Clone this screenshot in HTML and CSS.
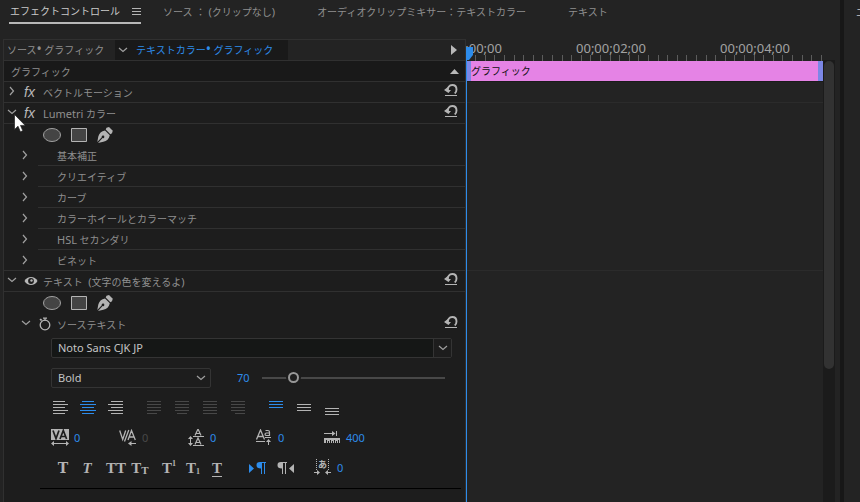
FILE: index.html
```html
<!DOCTYPE html>
<html lang="ja">
<head>
<meta charset="utf-8">
<title>エフェクトコントロール</title>
<link rel="stylesheet" href="styles.css">
</head>
<body>
<svg class="defs" aria-hidden="true">
  <symbol id="right" viewBox="0 0 10 10"><path d="M3 1l3.500 4L3 9" fill="none" stroke="currentColor" stroke-width="1.200"/></symbol>
  <symbol id="down" viewBox="0 0 10 10"><path d="M1 3l4 3.500L9 3" fill="none" stroke="currentColor" stroke-width="1.200"/></symbol>
  <symbol id="reset" viewBox="0 0 14 14"><path d="M4 8.500C3 4.500 5.500 2 8.300 2c2.600 0 4.200 2 4.200 4.500 0 1.700-.6 3.200-1.800 4" fill="none" stroke="currentColor" stroke-width="1.900"/><path d="M0 7l4.500-3.500V7H7l-2.500 3zM1 12h12v1H1z" fill="currentColor"/></symbol>
  <symbol id="ellipse" viewBox="0 0 18 14"><ellipse cx="9" cy="7" rx="8.500" ry="6.500" fill="#444" stroke="#a2a2a2"/></symbol>
  <symbol id="rect" viewBox="0 0 16 14"><path d="M.5.5h15v13H.5z" fill="#444" stroke="#b4b4b4"/></symbol>
  <symbol id="pen" viewBox="0 0 16 16"><path d="M9.500.7L12 0l3.800 3.800-.8 2.500-1.600 1L8.700 2.400z" fill="#b4b4b4"/><path d="M8 3.400l4.800 4.800c-.8 3.600-3 6-6.500 6.600L1 16l4.600-5a1.300 1.300 0 1 0-.8-.8L.3 15l1-5.400C2 6.200 4.500 4 8 3.400z" fill="#b4b4b4"/></symbol>
  <symbol id="eye" viewBox="0 0 14 10"><path d="M.5 5C3-.2 11-.2 13.500 5 11 10.200 3 10.200.5 5z" fill="#b8b8b8"/><circle cx="7" cy="5" r="2.900" fill="#1d1d1d"/><circle cx="7.500" cy="4.500" r="1.200" fill="#b8b8b8"/></symbol>
  <symbol id="watch" viewBox="0 0 12 14"><circle cx="6" cy="8" r="4.800" fill="none" stroke="currentColor" stroke-width="1.300"/><path d="M4 .5h4v1.300H4zM5.400 1h1.200v3H5.400zM.4 2.600l1.500-1L3.300 3 2 4z" fill="currentColor"/></symbol>
  <symbol id="al-left" viewBox="0 0 16 14"><path d="M1 .5h12M1 3.500h15M1 6.500h12M1 9.500h15M1 12.500h12" stroke="currentColor"/></symbol>
  <symbol id="al-center" viewBox="0 0 16 14"><path d="M2 .5h12M0 3.500h16M2 6.500h12M0 9.500h16M2 12.500h12" stroke="currentColor"/></symbol>
  <symbol id="al-right" viewBox="0 0 16 14"><path d="M3 .5h12M0 3.500h15M3 6.500h12M0 9.500h15M3 12.500h12" stroke="currentColor"/></symbol>
  <symbol id="ju-left" viewBox="0 0 16 14"><path d="M1 .5h14M1 3.500h14M1 6.500h14M1 9.500h14M1 12.500h10" stroke="currentColor"/></symbol>
  <symbol id="ju-center" viewBox="0 0 16 14"><path d="M1 .5h14M1 3.500h14M1 6.500h14M1 9.500h14M3 12.500h10" stroke="currentColor"/></symbol>
  <symbol id="ju-all" viewBox="0 0 16 14"><path d="M1 .5h14M1 3.500h14M1 6.500h14M1 9.500h14M1 12.500h14" stroke="currentColor"/></symbol>
  <symbol id="ju-right" viewBox="0 0 16 14"><path d="M1 .5h14M1 3.500h14M1 6.500h14M1 9.500h14M5 12.500h10" stroke="currentColor"/></symbol>
  <symbol id="v-top" viewBox="0 0 16 14"><path d="M1 .5h14M1 3.500h14M1 6.500h14" stroke="currentColor"/></symbol>
  <symbol id="v-mid" viewBox="0 0 16 14"><path d="M1 3.500h14M1 6.500h14M1 9.500h14" stroke="currentColor"/></symbol>
  <symbol id="v-bot" viewBox="0 0 16 14"><path d="M1 7.500h14M1 10.500h14M1 13.500h14" stroke="currentColor"/></symbol>
</svg>

<div class="app">
  <section class="panel">
    <nav class="tabs">
      <a class="tab current" href="#effects">エフェクトコントロール
        <svg width="9" height="8" viewBox="0 0 9 8"><path d="M0 1.500h9M0 4.500h9M0 7.500h9" stroke="#b4b4b4"/></svg></a>
      <a class="tab" href="#source">ソース<span class="colon">：</span><span class="latin">(</span>クリップなし<span class="latin">)</span></a>
      <a class="tab" href="#mixer">オーディオクリップミキサー：テキストカラー</a>
      <a class="tab" href="#text">テキスト</a>
    </nav>

    <div class="body">
      <div class="effects">
        <div class="source">
          <span class="source-name">ソース<span class="dot">•</span> グラフィック</span>
          <button class="clip-name"><svg class="chev"><use href="#down"/></svg><span>テキストカラー<span class="dot">•</span> グラフィック</span></button>
          <button class="end" aria-label="タイムライン表示"><svg width="6" height="10" viewBox="0 0 6 10"><path d="M0 0l6 5-6 5z" fill="#b8b8b8"/></svg></button>
        </div>
        <div class="row heading"><span class="name">グラフィック</span>
          <button class="end" aria-label="折りたたむ"><svg width="9" height="5" viewBox="0 0 9 5"><path d="M0 5l4.500-5L9 5z" fill="#b8b8b8"/></svg></button></div>
        <div class="row"><button class="twirl" aria-label="開く"><svg class="chev"><use href="#right"/></svg></button><span class="fx">fx</span><span class="name">ベクトルモーション</span><button class="reset" aria-label="リセット"><svg><use href="#reset"/></svg></button></div>
        <div class="row"><button class="twirl" aria-label="閉じる"><svg class="chev"><use href="#down"/></svg></button><span class="fx">fx</span><span class="name"><span class="latin">Lumetri</span> カラー</span><button class="reset" aria-label="リセット"><svg><use href="#reset"/></svg></button></div>
        <div class="masks"><button aria-label="楕円形マスク"><svg width="18" height="14"><use href="#ellipse"/></svg></button><button aria-label="長方形マスク"><svg width="16" height="14"><use href="#rect"/></svg></button><button aria-label="ペンマスク"><svg width="16" height="16"><use href="#pen"/></svg></button></div>
        <div class="child"><button class="twirl" aria-label="開く"><svg class="chev"><use href="#right"/></svg></button><span class="name">基本補正</span></div>
        <div class="child"><button class="twirl" aria-label="開く"><svg class="chev"><use href="#right"/></svg></button><span class="name">クリエイティブ</span></div>
        <div class="child"><button class="twirl" aria-label="開く"><svg class="chev"><use href="#right"/></svg></button><span class="name">カーブ</span></div>
        <div class="child"><button class="twirl" aria-label="開く"><svg class="chev"><use href="#right"/></svg></button><span class="name">カラーホイールとカラーマッチ</span></div>
        <div class="child"><button class="twirl" aria-label="開く"><svg class="chev"><use href="#right"/></svg></button><span class="name"><span class="latin">HSL</span> セカンダリ</span></div>
        <div class="child last"><button class="twirl" aria-label="開く"><svg class="chev"><use href="#right"/></svg></button><span class="name">ビネット</span></div>
        <div class="row text-layer"><button class="twirl" aria-label="閉じる"><svg class="chev"><use href="#down"/></svg></button><button class="eye" aria-label="表示"><svg width="14" height="10"><use href="#eye"/></svg></button><span class="name">テキスト <span class="latin">&nbsp;(</span>文字の色を変えるよ<span class="latin">)</span></span><button class="reset" aria-label="リセット"><svg><use href="#reset"/></svg></button></div>
        <div class="masks"><button aria-label="楕円形マスク"><svg width="18" height="14"><use href="#ellipse"/></svg></button><button aria-label="長方形マスク"><svg width="16" height="14"><use href="#rect"/></svg></button><button aria-label="ペンマスク"><svg width="16" height="16"><use href="#pen"/></svg></button></div>
        <div class="row source-text"><button class="twirl" aria-label="閉じる"><svg class="chev"><use href="#down"/></svg></button><button class="watch" aria-label="アニメーションのオン/オフ"><svg width="12" height="14"><use href="#watch"/></svg></button><span class="name">ソーステキスト</span><button class="reset" aria-label="リセット"><svg><use href="#reset"/></svg></button></div>

        <div class="type">
          <div class="pick family"><select aria-label="フォント"><option>Noto Sans CJK JP</option></select><span class="arrow"><svg class="chev"><use href="#down"/></svg></span></div>
          <div class="style-line">
            <div class="pick"><select aria-label="スタイル"><option>Bold</option></select><span class="arrow"><svg class="chev"><use href="#down"/></svg></span></div>
            <label class="num" for="size">70</label>
            <input id="size" type="range" min="0" max="460" value="70">
          </div>
          <div class="aligns">
            <div class="set"><button aria-label="左揃え"><svg><use href="#al-left"/></svg></button><button class="on" aria-label="中央揃え"><svg><use href="#al-center"/></svg></button><button aria-label="右揃え"><svg><use href="#al-right"/></svg></button></div>
            <div class="set off"><button disabled aria-label="均等配置 左"><svg><use href="#ju-left"/></svg></button><button disabled aria-label="均等配置 中央"><svg><use href="#ju-center"/></svg></button><button disabled aria-label="両端揃え"><svg><use href="#ju-all"/></svg></button><button disabled aria-label="均等配置 右"><svg><use href="#ju-right"/></svg></button></div>
            <div class="set"><button class="on" aria-label="上揃え"><svg><use href="#v-top"/></svg></button><button aria-label="垂直中央"><svg><use href="#v-mid"/></svg></button><button aria-label="下揃え"><svg><use href="#v-bot"/></svg></button></div>
          </div>
          <div class="metrics">
            <div><svg class="ico" viewBox="0 0 18 18"><path d="M0 0h18v11H0z" fill="#b4b4b4"/><path d="M2 1.500l3 8 3-8M9 10l3.300-8.500L15.600 10M10.300 7.500h4.200" fill="none" stroke="#1d1d1d" stroke-width="1.700"/><path d="M2 14.500h14" stroke="#b4b4b4"/><path d="M0 14.500l3-2.500v5zM18 14.500l-3-2.500v5z" fill="#b4b4b4"/></svg><span class="num">0</span></div>
            <div><svg class="ico" viewBox="0 0 18 18"><path d="M.7 1.500l3 9 3-9M9 11l3.500-9.500L16.300 11M10.300 8h5M9.800 1L5.500 12.500" fill="none" stroke="#b4b4b4" stroke-width="1.300"/><path d="M11 14.500h6" stroke="#b4b4b4"/><path d="M9 14.500l3.500-2.500v5z" fill="#b4b4b4"/></svg><span class="num dim">0</span></div>
            <div><svg class="ico" viewBox="0 0 18 18"><path d="M8 6.500L11 0l3 6.500M9 4.500h4M8 15.500L11 9l3 6.500M9 13.500h4" fill="none" stroke="#b4b4b4" stroke-width="1.200"/><path d="M6 7.500h11M6 16.500h11M3.500 9v6" stroke="#b4b4b4"/><path d="M3.500 7L6 10H1zM3.500 17L6 14H1z" fill="#b4b4b4"/></svg><span class="num">0</span></div>
            <div><svg class="ico" viewBox="0 0 18 18"><path d="M1.500 10.500L5.500 1l4 9.500M3 7.500h5" fill="none" stroke="#b4b4b4" stroke-width="1.300"/><path d="M10.500 1.500h2.300c1.200 0 1.700.6 1.700 1.500v3.500h-3c-2 0-2-2.500 0-2.500h3" fill="none" stroke="#b4b4b4" stroke-width="1.200"/><path d="M1 12.500h9M10 8.500h6M13.500 12v4" stroke="#b4b4b4"/><path d="M13.500 10l2.500 3h-5z" fill="#b4b4b4"/></svg><span class="num">0</span></div>
            <div><svg class="ico" viewBox="0 0 18 18"><path d="M1 4.500h9M13.500 2v5" stroke="#b4b4b4"/><path d="M9 2l3.500 2.500L9 7zM1 9h16v5h-1v-3h-1v3h-1v-2h-1v2h-1v-3h-1v3h-1v-2H9v2H8v-3H7v3H6v-2H5v2H4v-3H3v3H1z" fill="#b4b4b4"/></svg><span class="num">400</span></div>
          </div>
          <div class="styles">
            <div class="set"><button class="bold" aria-label="太字">T</button><button class="slant" aria-label="斜体">T</button></div>
            <div class="set caps"><button aria-label="オールキャップス">TT</button><button aria-label="スモールキャップス">T<small>T</small></button></div>
            <div class="set"><button aria-label="上付き">T<sup>1</sup></button><button aria-label="下付き">T<sub>1</sub></button><button class="under" aria-label="下線">T</button></div>
            <div class="set wide"><button class="on" aria-label="左から右"><svg class="ico" viewBox="0 0 18 18"><path d="M1 5v9l5-4.500zM12 3h6v1h-1v11h-1V4h-2v11h-1v-5.500c-3 0-4.500-1-4.500-3.200S9.500 3 12 3z" fill="currentColor"/></svg></button><button aria-label="右から左"><svg class="ico" viewBox="0 0 18 18"><path d="M18 5v9l-5-4.500zM5 3h6v1h-1v11H9V4H7v11H6V9.500c-3 0-4.500-1-4.500-3.200S2.500 3 5 3z" fill="currentColor"/></svg></button></div>
            <div class="tsume"><svg class="ico" viewBox="0 0 18 18"><path d="M2.500 0v11M14.500 0v11" stroke="#b4b4b4" stroke-dasharray="1 1"/><text x="8.500" y="9" font-size="9" font-weight="bold" text-anchor="middle" fill="#b4b4b4">あ</text><path d="M0 13.500h4M13 13.500h4" stroke="#b4b4b4"/><path d="M6 13.500L3 11v5zM11 13.500L14 11v5z" fill="#b4b4b4"/></svg><span class="num">0</span></div>
          </div>
        </div>
      </div>

      <div class="timeline">
        <div class="ruler"><div class="times"><span>00;00;00;00</span><span>00;00;02;00</span><span>00;00;04;00</span></div>
          <svg class="ticks"><defs><pattern id="tick" width="48" height="6" patternUnits="userSpaceOnUse"><path d="M.5 0v6M9.500 0v6M19.500 0v6M28.500 0v6M38.500 0v6" stroke="#5c5c5c"/></pattern></defs><rect width="100%" height="6" fill="url(#tick)"/></svg></div>
        <div class="clip">グラフィック</div>
        <div class="lane first"></div>
        <div class="lane tall"></div>
        <div class="playhead"><svg width="6" height="13" viewBox="0 0 6 13"><path d="M0 0h6v8l-4 5H0z" fill="#2d8ceb"/></svg></div>
      </div>
      <div class="scroll"><div class="thumb"></div></div>
    </div>
  </section>
  <section class="next"><a class="tab current" href="#project">エ</a></section>
  <svg class="pointer" width="12" height="19" viewBox="0 0 12 19"><path d="M.5.5v15l3.500-3.300 2.400 5.600 2.400-1L6.500 11.400h4.700z" fill="#fff" stroke="#222" stroke-width=".7"/></svg>
</div>
</body>
</html>
```
FILE: styles.css
```css
* { box-sizing: border-box; }

body {
  margin: 0;
  background: #232323;
  color: #8f8f8f;
  font-family: "Noto Sans", "Noto Sans CJK JP", sans-serif;
  font-size: 10px;
  line-height: 16px;
}

.defs { display: block; width: 0; height: 0; position: absolute; }
svg { display: block; flex: none; }
svg text { font-family: "Noto Sans", "Noto Sans CJK JP", sans-serif; }

button {
  display: flex;
  align-items: center;
  margin: 0;
  padding: 0;
  border: 0;
  background: none;
  color: #b4b4b4;
  font: inherit;
}

a { color: inherit; text-decoration: none; }
.latin { font-size: 11px; }
.dot { font-size: 14px; line-height: 10px; }
.chev { width: 10px; height: 10px; color: #a0a0a0; }

.app { display: flex; min-height: 100vh; overflow: hidden; position: relative; }
.panel { flex: 1; min-width: 0; display: flex; flex-direction: column; }
.next { width: 20px; border-left: 4px solid #171717; padding: 4px 0 0 12px; overflow: hidden; }

.tabs { display: flex; height: 39px; padding: 4px 9px 0; white-space: nowrap; }
.tab { margin-right: 42px; }
.tabs .tab:nth-child(1) { margin-right: 22px; }
.current {
  display: flex;
  align-items: center;
  gap: 12px;
  height: 20px;
  padding: 0 0 4px 1px;
  border-bottom: 2px solid #b8b8b8;
  color: #cacaca;
}
.next .current { border: 0; padding: 0 0 4px; }
.colon { margin: 0 3px; }

.body {
  flex: 1;
  display: grid;
  grid-template-columns: 463fr 357fr 12px;
  padding: 0 5px 0 3px;
}

.effects {
  min-width: 0;
  border: 1px solid #303030;
  border-bottom: 0;
  background: #1d1d1d;
}

.source { display: flex; height: 21px; border-bottom: 1px solid #303030; background: #232323; }
.source-name { width: 111px; padding: 2px 0 0 3px; white-space: nowrap; }
.clip-name { width: 173px; gap: 8px; padding-left: 3px; background: #191919; color: #2d8ceb; white-space: nowrap; }

.end { margin-left: auto; padding-right: 8px; }
.heading .end { padding-right: 6px; }

.row { display: flex; align-items: center; height: 21px; border-bottom: 1px solid #303030; }
.heading { background: #191919; padding-left: 7px; }
.name { padding-top: 2px; }
.twirl { width: 20px; height: 16px; padding-left: 3px; align-items: flex-start; padding-top: 2px; }
.fx { width: 19px; color: #b8b8b8; font: italic 14px/18px "Liberation Sans", sans-serif; }
.eye { width: 19px; }
.reset { margin-left: auto; padding: 0 7px 4px 0; }
.reset svg { width: 14px; height: 14px; }

.masks { display: flex; align-items: center; gap: 10px; height: 21px; padding-left: 39px; }

.child { display: flex; height: 21px; }
.child .twirl { width: 34px; padding: 5px 0 0 16px; }
.child .name { flex: 1; padding: 3px 0 0 19px; border-bottom: 1px solid #303030; }
.last { border-bottom: 1px solid #303030; }
.last .name { border: 0; }

.source-text { border: 0; padding-left: 14px; }
.watch { width: 19px; padding-left: 1px; }

.type { margin: 4px 4px 0 36px; padding-left: 11px; border-bottom: 1px solid #000; }

.pick { position: relative; width: 160px; height: 20px; border: 1px solid #343434; border-radius: 2px; display: flex; }
.pick select {
  appearance: none;
  width: 100%;
  margin: 0;
  padding: 0 20px 0 6px;
  border: 0;
  background: none;
  color: #c4c4c4;
  font: 11px/18px "Noto Sans", sans-serif;
}
.arrow { position: absolute; right: 0; top: 0; bottom: 0; width: 18px; padding: 4px; pointer-events: none; }
.family { width: auto; margin-right: 9px; background: #151716; }
.family .arrow { border-left: 1px solid #343434; background: #1d1d1d; }

.style-line { display: flex; align-items: center; margin: 10px 16px 0 0; }
.num { color: #2d8ceb; font-size: 11px; }
.dim { color: #484848; }
.style-line .num { width: 51px; padding-left: 26px; }

input[type="range"] { appearance: none; flex: 1; min-width: 0; height: 12px; margin: 0; background: none; }
input[type="range"]::-webkit-slider-runnable-track { height: 2px; background: #484848; }
input[type="range"]::-webkit-slider-thumb {
  appearance: none;
  width: 11px;
  height: 11px;
  margin-top: -5px;
  border: 2px solid #989898;
  border-radius: 50%;
  background: #1d1d1d;
  box-shadow: 0 0 0 2px #1d1d1d;
}

.aligns { display: flex; gap: 22px; margin: 13px 0 0 1px; }
.set { display: flex; gap: 12px; }
.aligns svg { width: 16px; height: 14px; }
.off button { color: #484848; }
.set .on { color: #2d8ceb; }

.metrics { display: grid; grid-template-columns: repeat(5, 68px); margin-top: 14px; }
.metrics div, .tsume { display: flex; align-items: center; gap: 5px; }
.ico { width: 18px; height: 18px; }

.styles { display: flex; gap: 10px; height: 18px; margin: 12px 0 11px 3px; }
.styles .set { gap: 6px; }
.styles button { width: 18px; height: 18px; justify-content: center; font: bold 15px/18px "Liberation Serif", serif; }
.styles .caps { gap: 4px; }
.styles .caps button { width: 20px; }
.styles .wide { gap: 10px; margin: 0 10px 0 12px; }
.styles .bold { font: bold 14px/18px "DejaVu Serif", serif; }
.styles .slant { font-style: italic; }
.styles .under { text-decoration: underline; text-underline-offset: 3px; }
small { font-size: 11px; padding-top: 3px; }
sup, sub { font-size: 8px; line-height: 8px; vertical-align: baseline; }
sup { padding-bottom: 8px; }
sub { padding-top: 8px; }

.timeline { min-width: 0; position: relative; overflow: hidden; }
.ruler { height: 22px; display: flex; flex-direction: column; overflow: hidden; }
.times { display: flex; height: 16px; margin-left: -71px; font-size: 13px; line-height: 18px; color: #a2a2a2; }
.times span { flex: 0 0 144px; text-align: center; }
.ticks { width: 100%; height: 6px; }
.clip {
  height: 20px;
  border: 0 solid #7c87e6;
  border-width: 0 5px;
  background: #e583e5;
  color: #111;
  line-height: 21px;
}
.lane { border-bottom: 1px solid #2b2b2b; }
.first { height: 22px; border-top: 1px solid #1b1b1b; }
.tall { height: 168px; }
.playhead { position: absolute; left: 0; top: 8px; bottom: 0; border-left: 1px solid #2d8ceb; }

.scroll { margin-top: 21px; padding: 1px; background: #1b1b1b; }
.thumb { height: 308px; border-radius: 5px; background: #323232; }

.pointer { position: absolute; left: 14px; top: 114px; }
```
